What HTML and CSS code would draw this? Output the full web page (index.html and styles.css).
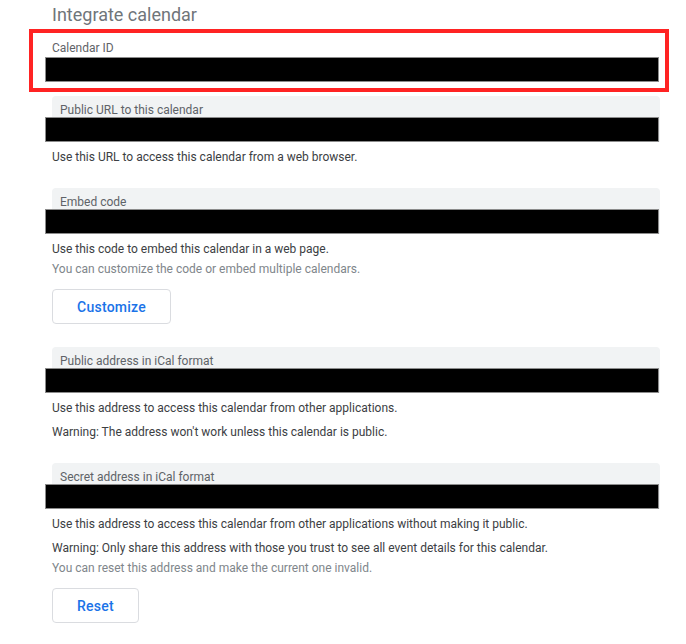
FILE: index.html
```html
<!DOCTYPE html>
<html>
<head>
<meta charset="utf-8">
<link rel="stylesheet" href="styles.css">
</head>
<body>
<main class="page">
  <h2 class="title">Integrate calendar</h2>

  <div class="highlight">
    <div class="field plain">
      <div class="field-label">Calendar ID</div>
      <div class="redact"></div>
    </div>
  </div>

  <section class="block first">
    <div class="field">
      <div class="field-label">Public URL to this calendar</div>
      <div class="redact"></div>
    </div>
    <p class="help">Use this URL to access this calendar from a web browser.</p>
  </section>

  <section class="block">
    <div class="field">
      <div class="field-label">Embed code</div>
      <div class="redact"></div>
    </div>
    <p class="help">Use this code to embed this calendar in a web page.</p>
    <p class="help muted">You can customize the code or embed multiple calendars.</p>
    <button class="btn">Customize</button>
  </section>

  <section class="block">
    <div class="field">
      <div class="field-label">Public address in iCal format</div>
      <div class="redact"></div>
    </div>
    <p class="help">Use this address to access this calendar from other applications.</p>
    <p class="help warn">Warning: The address won't work unless this calendar is public.</p>
  </section>

  <section class="block">
    <div class="field">
      <div class="field-label">Secret address in iCal format</div>
      <div class="redact"></div>
    </div>
    <p class="help">Use this address to access this calendar from other applications without making it public.</p>
    <p class="help warn">Warning: Only share this address with those you trust to see all event details for this calendar.</p>
    <p class="help muted">You can reset this address and make the current one invalid.</p>
    <button class="btn">Reset</button>
  </section>
</main>
</body>
</html>
```

FILE: styles.css
```css
html, body {
  margin: 0;
  padding: 0;
  background: #ffffff;
}

body {
  font-family: Roboto, "Liberation Sans", Arial, sans-serif;
  color: #3c4043;
}

.page {
  padding: 3px 0 0 52px;
  display: flex;
  flex-direction: column;
  align-items: flex-start;
}

.title {
  margin: 0;
  font-size: 18px;
  line-height: 24px;
  font-weight: 400;
  color: #70757a;
}

.highlight {
  margin: 2px 0 0 -23px;
  width: 613px;
  border: 4px solid #ff2323;
  padding: 0 0 6px 19px;
}

.field {
  width: 608px;
  background: #f1f3f4;
  border-radius: 4px 4px 0 0;
}

.field.plain {
  background: transparent;
}

.field-label {
  font-size: 12px;
  line-height: 14px;
  padding: 7px 0 0 8px;
  height: 14px;
  color: #5f6368;
}

.field.plain .field-label {
  padding: 8px 0 2px 0;
}

.redact {
  margin-left: -7px;
  width: 612px;
  height: 23px;
  background: #000000;
  border: 1px solid #8c8c8c;
}

.block {
  margin-top: 23px;
  display: flex;
  flex-direction: column;
  align-items: flex-start;
}

.block.first {
  margin-top: 4px;
}

.help {
  margin: 7px 0 0 0;
  font-size: 12px;
  line-height: 16px;
  color: #3c4043;
}

.help.warn {
  margin-top: 8px;
}

.help.muted {
  margin-top: 4px;
  color: #80868b;
}

.btn {
  margin-top: 12px;
  height: 35px;
  padding: 0 24px;
  background: #ffffff;
  border: 1px solid #dadce0;
  border-radius: 4px;
  font-family: Roboto, "Liberation Sans", Arial, sans-serif;
  font-size: 14px;
  font-weight: 500;
  color: #1a73e8;
  letter-spacing: 0.25px;
}
```
